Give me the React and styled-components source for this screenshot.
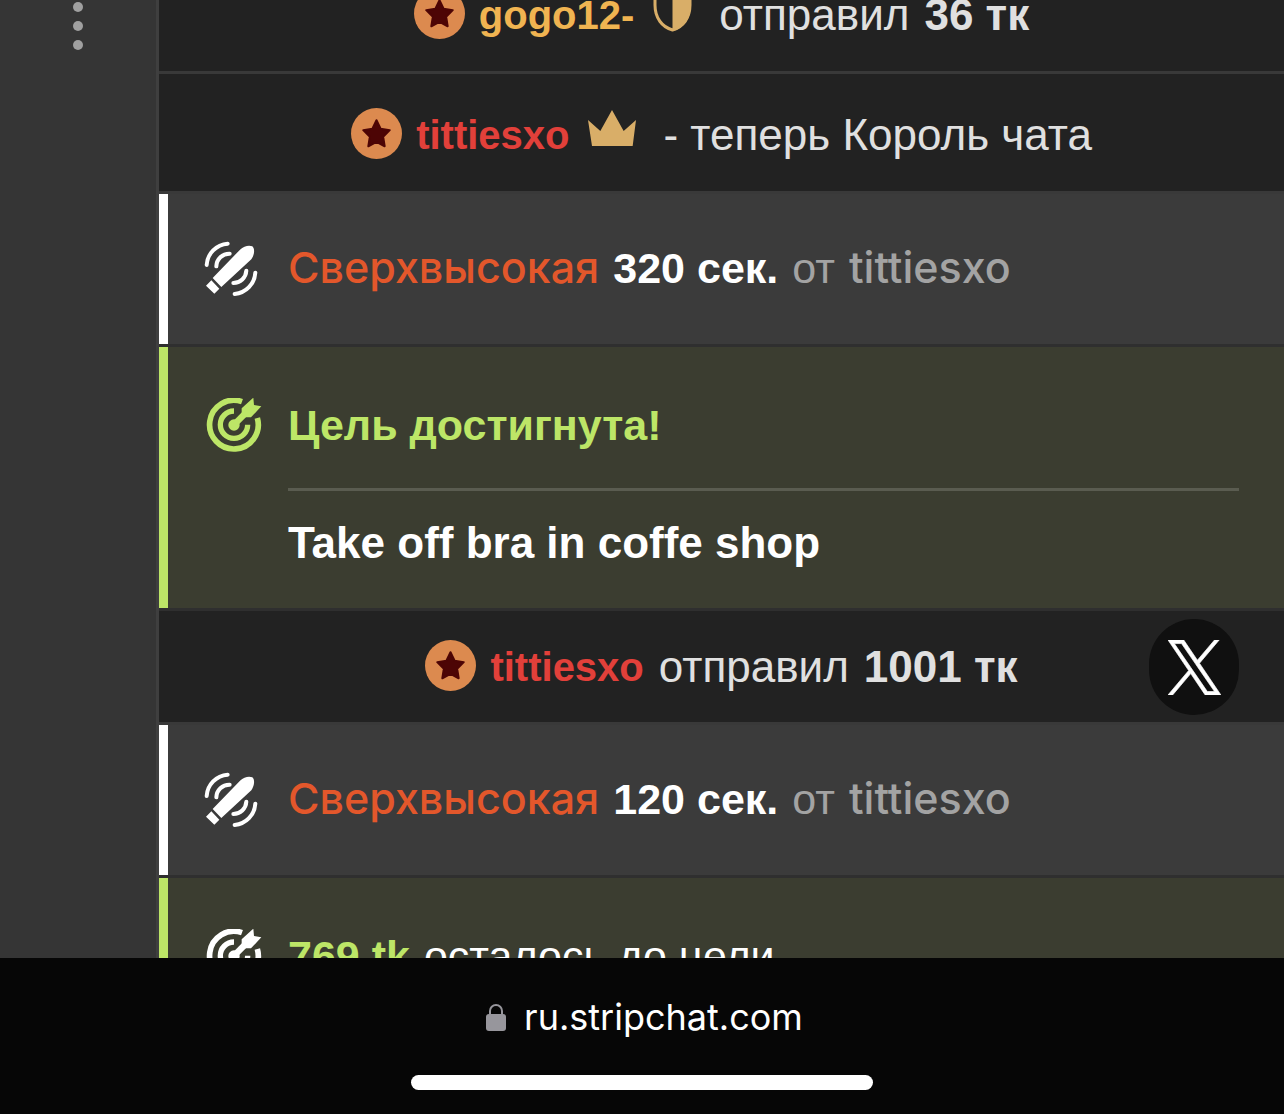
import styled, { createGlobalStyle } from "styled-components";

const colors = {
    page: '#353535',
    chat: '#222222',
    tip: '#3b3b3b',
    goal: '#3b3d30',
    line: '#2f2f2f',
    green: '#bde667',
    orange: '#e3572b',
    red: '#e2403a',
    yellow: '#f0b451',
    gold: '#d9ae68',
    text: '#e0e0e0',
    muted: '#a3a3a3',
};

const sans = '"Liberation Sans", Arial, sans-serif';
const medium = 'Inter, "Liberation Sans", sans-serif';

const GlobalStyle = createGlobalStyle`
    * {
        box-sizing: border-box;
    }

    body {
        margin: 0;
        background: #060606;
        color: ${colors.text};
        font-family: ${sans};
        font-size: 44px;
        line-height: 62px;
    }

    button {
        padding: 0;
        border: 0;
        background: none;
        color: inherit;
        font: inherit;
        cursor: pointer;
    }

    svg {
        display: block;
        flex: none;
    }
`

const Page = styled.div`
    display: flex;
    flex-direction: column;
    height: 100vh;
`

const Content = styled.div`
    display: flex;
    flex: 1;
    min-height: 0;
    overflow: hidden;
`

const Rail = styled.aside`
    display: flex;
    justify-content: center;
    align-items: flex-start;
    flex: none;
    width: 159px;
    background: ${colors.page};
    border-right: 3px solid #3f3f3f;
`

const MenuButton = styled.button`
    display: flex;
    flex-direction: column;
    gap: 9px;
    padding-top: 2px;
`

const Dot = styled.span`
    width: 10px;
    height: 10px;
    border-radius: 50%;
    background: #a0a0a0;
`

/* the feed is scrolled a little, the first row is half hidden */
const Feed = styled.main`
    flex: 1;
    min-width: 0;
    margin-top: -46px;
`

const Message = styled.div`
    position: relative;
    display: flex;
    justify-content: center;
    align-items: center;
    height: ${p => p.$tall ? '120px' : '114px'};
    padding-top: ${p => p.$tall ? '4px' : '0'};
    background: ${colors.chat};
    border-bottom: 3px solid #393939;
    white-space: nowrap;
`

const Level = styled.svg`
    width: 51px;
    height: 51px;
    margin: 0 14px 2px 0;
`

const Name = styled.strong`
    color: ${p => p.$color};
    font-size: 40px;
`

const Emblem = styled.span`
    padding: 0 27px 14px 19px;
`

const Sent = styled.span`
    display: flex;
    gap: 15px;
    margin-left: ${p => p.$spaced ? '15px' : '0'};
`

const Notice = styled.div`
    display: flex;
    gap: 26px;
    padding: ${p => p.$goal ? '47px 45px 34px 36px' : '42px 45px 46px 36px'};
    border-left: 9px solid ${p => p.$goal ? colors.green : '#ffffff'};
    background: ${p => p.$goal ? colors.goal : colors.tip};
    color: #ffffff;
    font-size: 43px;

    & + & {
        margin-top: 3px;
    }
`

const Group = styled.section`
    padding-bottom: 3px;
    background: ${colors.line};
`

const NoticeIcon = styled.svg`
    width: 58px;
    height: 58px;
    margin-top: 4px;
`

const NoticeText = styled.div`
    flex: 1;
    min-width: 0;
`

const Line = styled.div`
    display: flex;
    align-items: baseline;
    gap: 14px;
    height: 62px;
    white-space: nowrap;
`

const Strength = styled.span`
    color: ${colors.orange};
    font-family: ${medium};
    font-weight: 500;
`

const From = styled.span`
    color: ${colors.muted};
`

const Sender = styled(From)`
    font-family: ${medium};
    font-weight: 500;
`

const Highlight = styled.strong`
    color: ${colors.green};
`

const GoalName = styled.div`
    margin-top: 32px;
    padding-top: 21px;
    border-top: 3px solid #5a5c50;
    font-size: 44px;
    font-weight: bold;
`

const ShareButton = styled.button`
    position: absolute;
    right: 45px;
    top: 8px;
    display: flex;
    justify-content: center;
    align-items: center;
    width: 90px;
    height: 96px;
    border-radius: 45px;
    background: #101010;
`

const BrowserBar = styled.footer`
    display: flex;
    flex-direction: column;
    align-items: center;
    gap: 27px;
    padding: 28px 0 24px;
    background: #060606;
    color: #ffffff;
`

const Address = styled.button`
    display: flex;
    align-items: center;
    gap: 18px;
    padding-left: 5px;
    font-family: Inter, sans-serif;
    font-size: 36px;
`

const HomeBar = styled.div`
    width: 36%;
    height: 15px;
    border-radius: 8px;
    background: #ffffff;
`

const LevelBadge = () => (
    <Level viewBox="0 0 50 50">
        <circle cx="25" cy="25" r="25" fill="#dc8a4f" />
        <path
            d="M25 12l4 8.300 9 1.400-6.500 6.500 1.500 9.300-8-4.200-8 4.200 1.500-9.300-6.500-6.500 9-1.400z"
            fill="#4d0505"
            stroke="#4d0505"
            strokeWidth="2"
            strokeLinejoin="round"
        />
    </Level>
)

const Crown = () => (
    <svg width="48" height="36" viewBox="0 0 144 108">
        <path d="M0 30l37 33L72 0l35 63 37-33-10 78H12z" fill={colors.gold} />
    </svg>
)

const Shield = () => (
    <svg width="39" height="48" viewBox="0 0 39 48">
        <path
            d="M19.500 2L37 8v13c0 13-7 22-17.500 25C9 43 2 34 2 21V8z"
            fill="none"
            stroke={colors.gold}
            strokeWidth="3"
        />
        <path d="M19.500 1L38 7v14c0 14-8 24-18.500 26z" fill={colors.gold} />
    </svg>
)

const ToyIcon = () => (
    <NoticeIcon viewBox="162 180 174 174">
        <g fill="none" stroke="#ffffff" strokeWidth="12" strokeLinecap="round">
            <path d="M170 255A68 68 0 0 1 233 191" />
            <path d="M199 259A39 39 0 0 1 239 221" />
            <path d="M289 272A39 39 0 0 1 250 309" />
            <path d="M316 278A68 68 0 0 1 254 342" />
        </g>
        <path
            d="M188 294L270 209C282 197 298 195 307 199C315 206 314 224 304 238L214 321zM184 301L208 326L193 341L168 317z"
            fill="#ffffff"
        />
    </NoticeIcon>
)

const TargetIcon = ({ color }) => (
    <NoticeIcon viewBox="162 84 174 174">
        <g fill="none" stroke={color}>
            <path d="M276 95A73 73 0 1 0 322 144" strokeWidth="17" />
            <path d="M252 123A41 41 0 1 0 293 164" strokeWidth="16" />
            <path d="M252 164L290 126" strokeWidth="19" />
        </g>
        <circle cx="252" cy="165" r="17" fill={color} />
        <path d="M275 115L310 83L312 105L334 109L303 142H283L275 134z" fill={color} />
    </NoticeIcon>
)

const XLogo = () => (
    <svg width="53" height="55" viewBox="0 0 24 24" preserveAspectRatio="none" fill="#ffffff">
        <path d="M14.258 10.152L23.176 0h-2.113l-7.747 8.813L7.133 0H0l9.352 13.328L0 23.973h2.113l8.176-9.309 6.531 9.309h7.133zm-2.895 3.293l-.949-1.328L2.875 1.560h3.246l6.086 8.523.945 1.328 7.910 11.078h-3.246z" stroke="#ffffff" strokeWidth="0.3" />
    </svg>
)

const LockIcon = () => (
    <svg width="20" height="28" viewBox="0 0 20 28">
        <path d="M4 13V8a6 6 0 0 1 12 0v5" fill="none" stroke="#97969c" strokeWidth="2" />
        <rect y="11" width="20" height="17" rx="3" fill="#97969c" />
    </svg>
)

function Vibration({ seconds }) {
    return (
        <Notice>
            <ToyIcon />
            <NoticeText>
                <Line>
                    <Strength>Сверхвысокая</Strength>
                    <strong>{seconds} сек.</strong>
                    <From>от</From>
                    <Sender>tittiesxo</Sender>
                </Line>
            </NoticeText>
        </Notice>
    )
}

function App() {
    return (
        <Page>
            <GlobalStyle />
            <Content>
                <Rail>
                    <MenuButton aria-label="Меню">
                        <Dot />
                        <Dot />
                        <Dot />
                    </MenuButton>
                </Rail>
                <Feed>
                    <Message $tall>
                        <LevelBadge />
                        <Name $color={colors.yellow}>gogo12-</Name>
                        <Emblem><Shield /></Emblem>
                        <Sent>отправил <strong>36 тк</strong></Sent>
                    </Message>
                    <Message $tall>
                        <LevelBadge />
                        <Name $color={colors.red}>tittiesxo</Name>
                        <Emblem><Crown /></Emblem>
                        <span>- теперь Король чата</span>
                    </Message>
                    <Group>
                        <Vibration seconds={320} />
                        <Notice $goal>
                            <TargetIcon color={colors.green} />
                            <NoticeText>
                                <Line>
                                    <Highlight>Цель достигнута!</Highlight>
                                </Line>
                                <GoalName>Take off bra in coffe shop</GoalName>
                            </NoticeText>
                        </Notice>
                    </Group>
                    <Message>
                        <LevelBadge />
                        <Name $color={colors.red}>tittiesxo</Name>
                        <Sent $spaced>отправил <strong>1001 тк</strong></Sent>
                        <ShareButton aria-label="X">
                            <XLogo />
                        </ShareButton>
                    </Message>
                    <Group>
                        <Vibration seconds={120} />
                        <Notice $goal>
                            <TargetIcon color="#ffffff" />
                            <NoticeText>
                                <Line>
                                    <Highlight>769 tk</Highlight>
                                    <span>осталось до цели</span>
                                </Line>
                            </NoticeText>
                        </Notice>
                    </Group>
                </Feed>
            </Content>
            <BrowserBar>
                <Address>
                    <LockIcon />
                    ru.stripchat.com
                </Address>
                <HomeBar />
            </BrowserBar>
        </Page>
    )
}

export default App;
